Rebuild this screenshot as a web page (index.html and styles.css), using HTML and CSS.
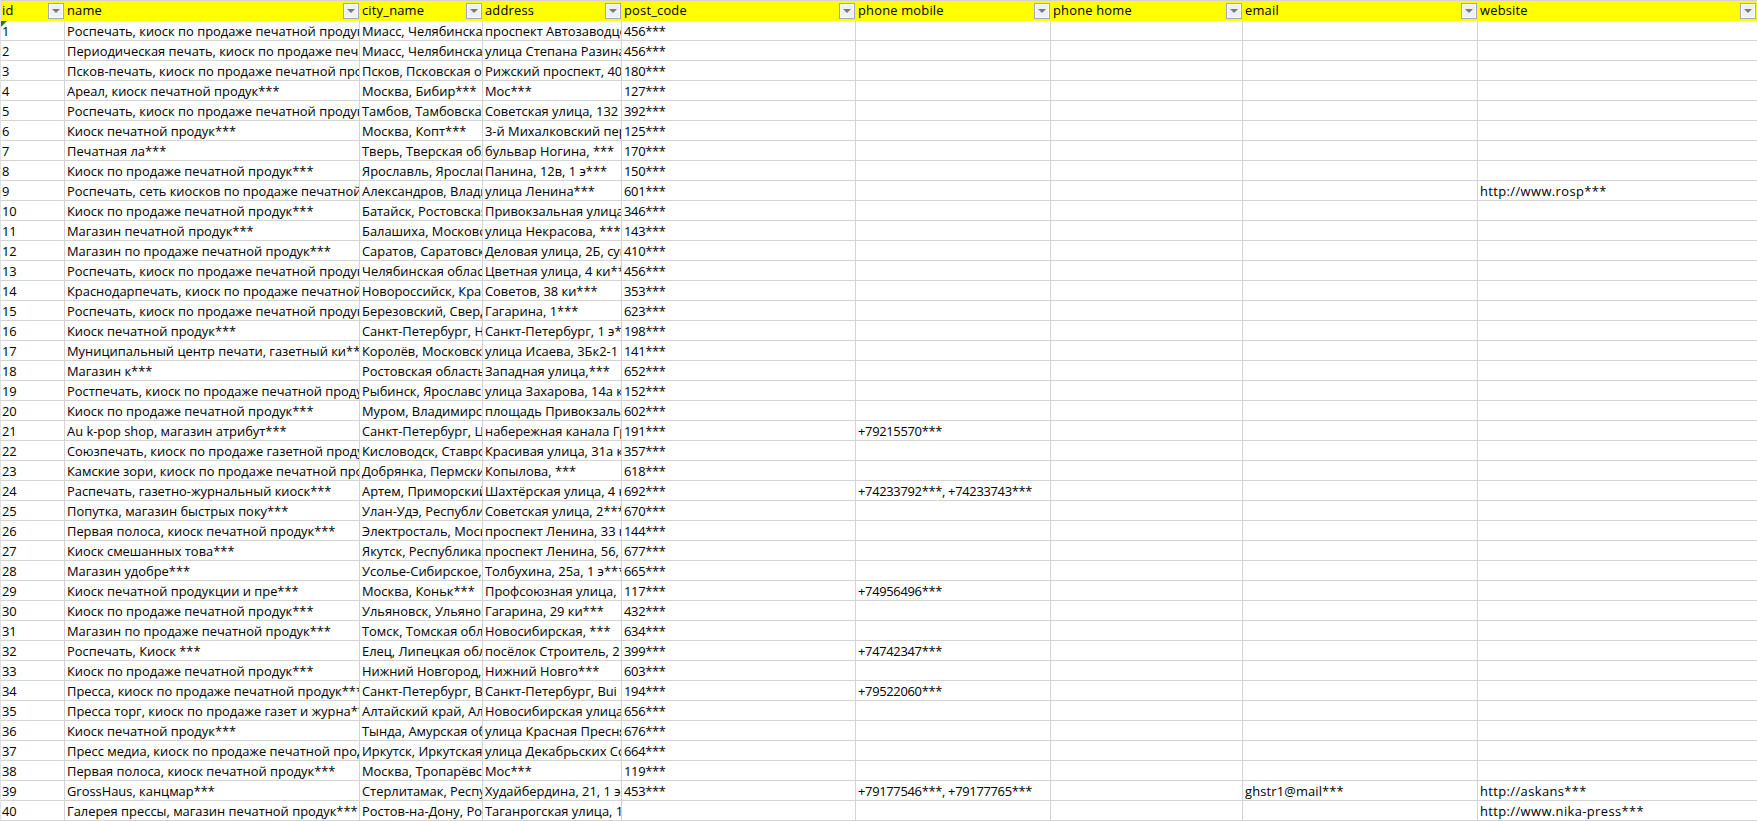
FILE: index.html
```html
<!DOCTYPE html>
<html lang="ru">
<head>
<meta charset="utf-8">
<title>Sheet</title>
<link rel="stylesheet" href="styles.css">
</head>
<body>
<table class="sheet">
<colgroup><col class="c-id"><col class="c-name"><col class="c-city"><col class="c-addr"><col class="c-post"><col class="c-mob"><col class="c-home"><col class="c-mail"><col class="c-web"></colgroup>
<thead>
<tr>
<th><div class="hd"><span>id</span><i class="fb"></i></div></th>
<th><div class="hd"><span>name</span><i class="fb"></i></div></th>
<th><div class="hd"><span>city_name</span><i class="fb"></i></div></th>
<th><div class="hd"><span>address</span><i class="fb"></i></div></th>
<th><div class="hd"><span>post_code</span><i class="fb"></i></div></th>
<th><div class="hd"><span>phone mobile</span><i class="fb"></i></div></th>
<th><div class="hd"><span>phone home</span><i class="fb"></i></div></th>
<th><div class="hd"><span>email</span><i class="fb"></i></div></th>
<th><div class="hd"><span>website</span><i class="fb"></i></div></th>
</tr>
</thead>
<tbody>
<tr><td class="first">1<i class="tri"></i></td><td>Роспечать, киоск по продаже печатной продукции</td><td>Миасс, Челябинская область</td><td>проспект Автозаводцев</td><td>456***</td><td></td><td></td><td></td><td></td></tr>
<tr><td>2</td><td>Периодическая печать, киоск по продаже печатной</td><td>Миасс, Челябинская область</td><td>улица Степана Разина</td><td>456***</td><td></td><td></td><td></td><td></td></tr>
<tr><td>3</td><td>Псков-печать, киоск по продаже печатной продукции</td><td>Псков, Псковская область</td><td>Рижский проспект, 40</td><td>180***</td><td></td><td></td><td></td><td></td></tr>
<tr><td>4</td><td>Ареал, киоск печатной продук***</td><td>Москва, Бибир***</td><td>Мос***</td><td>127***</td><td></td><td></td><td></td><td></td></tr>
<tr><td>5</td><td>Роспечать, киоск по продаже печатной продукции</td><td>Тамбов, Тамбовская область</td><td>Советская улица, 132</td><td>392***</td><td></td><td></td><td></td><td></td></tr>
<tr><td>6</td><td>Киоск печатной продук***</td><td>Москва, Копт***</td><td>3-й Михалковский переулок</td><td>125***</td><td></td><td></td><td></td><td></td></tr>
<tr><td>7</td><td>Печатная ла***</td><td>Тверь, Тверская область</td><td>бульвар Ногина, ***</td><td>170***</td><td></td><td></td><td></td><td></td></tr>
<tr><td>8</td><td>Киоск по продаже печатной продук***</td><td>Ярославль, Ярославская</td><td>Панина, 12в, 1 э***</td><td>150***</td><td></td><td></td><td></td><td></td></tr>
<tr><td>9</td><td>Роспечать, сеть киосков по продаже печатной</td><td>Александров, Владимирская</td><td>улица Ленина***</td><td>601***</td><td></td><td></td><td></td><td>http://www.rosp***</td></tr>
<tr><td>10</td><td>Киоск по продаже печатной продук***</td><td>Батайск, Ростовская область</td><td>Привокзальная улица</td><td>346***</td><td></td><td></td><td></td><td></td></tr>
<tr><td>11</td><td>Магазин печатной продук***</td><td>Балашиха, Московская</td><td>улица Некрасова, ***</td><td>143***</td><td></td><td></td><td></td><td></td></tr>
<tr><td>12</td><td>Магазин по продаже печатной продук***</td><td>Саратов, Саратовская</td><td>Деловая улица, 2Б, сущ</td><td>410***</td><td></td><td></td><td></td><td></td></tr>
<tr><td>13</td><td>Роспечать, киоск по продаже печатной продукции</td><td>Челябинская область</td><td>Цветная улица, 4 ки***</td><td>456***</td><td></td><td></td><td></td><td></td></tr>
<tr><td>14</td><td>Краснодарпечать, киоск по продаже печатной</td><td>Новороссийск, Краснодарский</td><td>Советов, 38 ки***</td><td>353***</td><td></td><td></td><td></td><td></td></tr>
<tr><td>15</td><td>Роспечать, киоск по продаже печатной продукции</td><td>Березовский, Свердловская</td><td>Гагарина, 1***</td><td>623***</td><td></td><td></td><td></td><td></td></tr>
<tr><td>16</td><td>Киоск печатной продук***</td><td>Санкт-Петербург, Невский</td><td>Санкт-Петербург, 1 э***</td><td>198***</td><td></td><td></td><td></td><td></td></tr>
<tr><td>17</td><td>Муниципальный центр печати, газетный ки***</td><td>Королёв, Московская</td><td>улица Исаева, 3Бк2-1</td><td>141***</td><td></td><td></td><td></td><td></td></tr>
<tr><td>18</td><td>Магазин к***</td><td>Ростовская область</td><td>Западная улица,***</td><td>652***</td><td></td><td></td><td></td><td></td></tr>
<tr><td>19</td><td>Ростпечать, киоск по продаже печатной продукции</td><td>Рыбинск, Ярославская</td><td>улица Захарова, 14а к</td><td>152***</td><td></td><td></td><td></td><td></td></tr>
<tr><td>20</td><td>Киоск по продаже печатной продук***</td><td>Муром, Владимирская</td><td>площадь Привокзальная</td><td>602***</td><td></td><td></td><td></td><td></td></tr>
<tr><td>21</td><td>Au k-pop shop, магазин атрибут***</td><td>Санкт-Петербург, Центральный</td><td>набережная канала Грибоедова</td><td>191***</td><td>+79215570***</td><td></td><td></td><td></td></tr>
<tr><td>22</td><td>Союзпечать, киоск по продаже газетной продукции</td><td>Кисловодск, Ставропольский</td><td>Красивая улица, 31а к</td><td>357***</td><td></td><td></td><td></td><td></td></tr>
<tr><td>23</td><td>Камские зори, киоск по продаже печатной продукции</td><td>Добрянка, Пермский</td><td>Копылова, ***</td><td>618***</td><td></td><td></td><td></td><td></td></tr>
<tr><td>24</td><td>Распечать, газетно-журнальный киоск***</td><td>Артем, Приморский</td><td>Шахтёрская улица, 4 ки</td><td>692***</td><td>+74233792***, +74233743***</td><td></td><td></td><td></td></tr>
<tr><td>25</td><td>Попутка, магазин быстрых поку***</td><td>Улан-Удэ, Республика</td><td>Советская улица, 2***</td><td>670***</td><td></td><td></td><td></td><td></td></tr>
<tr><td>26</td><td>Первая полоса, киоск печатной продук***</td><td>Электросталь, Московская</td><td>проспект Ленина, 33 кв</td><td>144***</td><td></td><td></td><td></td><td></td></tr>
<tr><td>27</td><td>Киоск смешанных това***</td><td>Якутск, Республика Саха</td><td>проспект Ленина, 56, 1</td><td>677***</td><td></td><td></td><td></td><td></td></tr>
<tr><td>28</td><td>Магазин удобре***</td><td>Усолье-Сибирское, Иркутская</td><td>Толбухина, 25а, 1 э***</td><td>665***</td><td></td><td></td><td></td><td></td></tr>
<tr><td>29</td><td>Киоск печатной продукции и пре***</td><td>Москва, Коньк***</td><td>Профсоюзная улица, 1</td><td>117***</td><td>+74956496***</td><td></td><td></td><td></td></tr>
<tr><td>30</td><td>Киоск по продаже печатной продук***</td><td>Ульяновск, Ульяновская</td><td>Гагарина, 29 ки***</td><td>432***</td><td></td><td></td><td></td><td></td></tr>
<tr><td>31</td><td>Магазин по продаже печатной продук***</td><td>Томск, Томская область</td><td>Новосибирская, ***</td><td>634***</td><td></td><td></td><td></td><td></td></tr>
<tr><td>32</td><td>Роспечать, Киоск ***</td><td>Елец, Липецкая область</td><td>посёлок Строитель, 2</td><td>399***</td><td>+74742347***</td><td></td><td></td><td></td></tr>
<tr><td>33</td><td>Киоск по продаже печатной продук***</td><td>Нижний Новгород, Нижегородская</td><td>Нижний Новго***</td><td>603***</td><td></td><td></td><td></td><td></td></tr>
<tr><td>34</td><td>Пресса, киоск по продаже печатной продук***</td><td>Санкт-Петербург, Выборгский</td><td>Санкт-Петербург, Bui</td><td>194***</td><td>+79522060***</td><td></td><td></td><td></td></tr>
<tr><td>35</td><td>Пресса торг, киоск по продаже газет и журна***</td><td>Алтайский край, Алейск</td><td>Новосибирская улица</td><td>656***</td><td></td><td></td><td></td><td></td></tr>
<tr><td>36</td><td>Киоск печатной продук***</td><td>Тында, Амурская область</td><td>улица Красная Пресня</td><td>676***</td><td></td><td></td><td></td><td></td></tr>
<tr><td>37</td><td>Пресс медиа, киоск по продаже печатной продукции</td><td>Иркутск, Иркутская область</td><td>улица Декабрьских Событий</td><td>664***</td><td></td><td></td><td></td><td></td></tr>
<tr><td>38</td><td>Первая полоса, киоск печатной продук***</td><td>Москва, Тропарёвский</td><td>Мос***</td><td>119***</td><td></td><td></td><td></td><td></td></tr>
<tr><td>39</td><td>GrossHaus, канцмар***</td><td>Стерлитамак, Республика</td><td>Худайбердина, 21, 1 э</td><td>453***</td><td>+79177546***, +79177765***</td><td></td><td>ghstr1@mail***</td><td>http://askans***</td></tr>
<tr><td>40</td><td>Галерея прессы, магазин печатной продук***</td><td>Ростов-на-Дону, Ростовская</td><td>Таганрогская улица, 1</td><td></td><td></td><td></td><td></td><td>http://www.nika-press***</td></tr>
</tbody>
</table>
</body>
</html>
```
FILE: styles.css
```css
html, body {
  margin: 0;
  padding: 0;
  background: #fff;
  overflow: hidden;
}
.sheet {
  table-layout: fixed;
  border-collapse: separate;
  border-spacing: 0;
  width: 1757px;
  font-family: "Open Sans", "Noto Sans", sans-serif;
  font-size: 12.9px;
  color: #000;
}
.c-id { width: 65px; }
.c-name { width: 295px; }
.c-city { width: 123px; }
.c-addr { width: 139px; }
.c-post { width: 234px; }
.c-mob { width: 195px; }
.c-home { width: 192px; }
.c-mail { width: 235px; }
.c-web { width: 279px; }
th {
  height: 20px;
  padding: 0;
  background: #ffff00;
  border-top: 1px solid #d4d4d4;
  font-weight: 400;
  text-align: left;
}
th:first-child, td:first-child { border-left: 1px solid #e2e2e2; }
th:first-child .hd { padding-left: 1px; }
td:first-child { padding-left: 1px; }
.hd {
  display: flex;
  align-items: center;
  justify-content: space-between;
  height: 20px;
  padding: 0 1px 0 2px;
  letter-spacing: 0.2px;
}
.hd span { line-height: 19px; padding-bottom: 1px; }
.fb {
  position: relative;
  display: block;
  box-sizing: border-box;
  width: 16px;
  height: 16px;
  border: 1px solid #9fa8c0;
  box-shadow: inset 0 0 0 1px #fff;
  background: #eef0f2;
}
.fb::after {
  content: "";
  position: absolute;
  left: 3px;
  top: 5px;
  border-left: 4px solid transparent;
  border-right: 4px solid transparent;
  border-top: 4px solid #7a7a7a;
}
td {
  box-sizing: border-box;
  height: 20px;
  padding: 2px 0 0 2px;
  border-right: 1px solid #d4d4d4;
  border-bottom: 1px solid #d4d4d4;
  white-space: nowrap;
  overflow: hidden;
  vertical-align: middle;
  line-height: 17px;
}
td:nth-child(5), td:nth-child(6) { letter-spacing: -0.3px; }
td:nth-child(8) { letter-spacing: 0.15px; }
td:nth-child(9) { letter-spacing: 0.4px; }
td:last-child { border-right: 0; }
.first { position: relative; }
.tri {
  position: absolute;
  left: 0;
  top: 0;
  border-top: 6px solid #217a21;
  border-right: 6px solid transparent;
}
```
